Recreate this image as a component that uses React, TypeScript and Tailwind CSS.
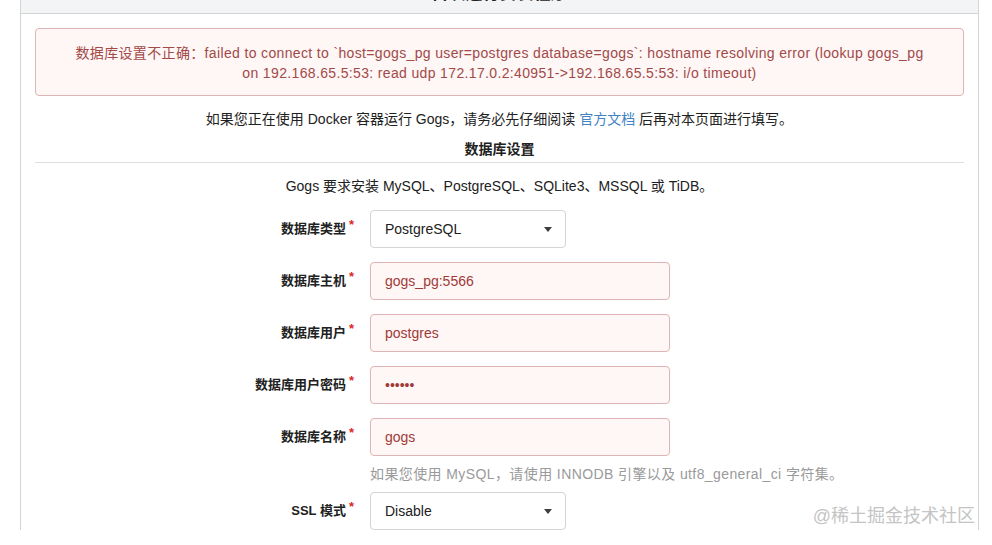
const FONT = {
  fontFamily: '"Liberation Sans", "Noto Sans CJK SC", sans-serif',
};

function Caret() {
  return (
    <svg width="8" height="5" viewBox="0 0 8 5" className="shrink-0">
      <path d="M0 0h8L4 5z" fill="#3d3d3d" />
    </svg>
  );
}

function Label({ text }: { text: string }) {
  return (
    <label className="w-[335px] shrink-0 pr-[16px] text-right text-[13px] font-bold text-[#212121]">
      {text}
      <span className="relative top-[-4px] ml-[3px] text-[#db2828]">*</span>
    </label>
  );
}

function SelectField({ label, value }: { label: string; value: string }) {
  return (
    <div className="flex items-center">
      <Label text={label} />
      <div className="flex h-[38px] w-[196px] items-center justify-between rounded-[4px] border border-[#d4d4d5] bg-white pl-[14px] pr-[13px] text-[14px] text-[#212121]">
        <span>{value}</span>
        <Caret />
      </div>
    </div>
  );
}

function ErrorInput({ label, value }: { label: string; value: string }) {
  return (
    <div className="flex items-center">
      <Label text={label} />
      <div className="flex h-[38px] w-[300px] items-center rounded-[4px] border border-[#e0b4b4] bg-[#fff6f6] px-[14px] text-[14px] text-[#9f3a38]">
        {value}
      </div>
    </div>
  );
}

export default function App() {
  return (
    <div className="relative h-[545px] w-[992px] overflow-hidden bg-white" style={FONT}>
      <div className="mx-[20px] mt-[-26px] w-[959px] border-x border-[#d4d4d5]">
        <div className="flex h-[40px] items-center justify-center border-b border-[#d4d4d5] bg-[#f3f4f5] text-[17px] font-bold text-[#212121]">
          首次运行安装程序
        </div>
        <div className="px-[14px] pt-[14px]">
          <div className="rounded-[4px] border border-[#e0b4b4] bg-[#fff6f6] px-[21px] pb-[12px] pt-[14px] text-center text-[14px] leading-[20px] tracking-[0.35px] text-[#a14a48]">
            数据库设置不正确：failed to connect to `host=gogs_pg user=postgres database=gogs`: hostname resolving error (lookup gogs_pg
            <br />
            on 192.168.65.5:53: read udp 172.17.0.2:40951-&gt;192.168.65.5:53: i/o timeout)
          </div>

          <p className="mt-[13px] text-center text-[14px] leading-[20px] text-[#212121]">
            如果您正在使用 Docker 容器运行 Gogs，请务必先仔细阅读{" "}
            <span className="text-[#4183c4]">官方文档</span> 后再对本页面进行填写。
          </p>

          <h4 className="mt-[10px] border-b border-[#dedede] pb-[3px] text-center text-[14px] font-bold leading-[20px] text-[#212121]">
            数据库设置
          </h4>

          <p className="mt-[13px] text-center text-[14px] leading-[20px] text-[#212121]">
            Gogs 要求安装 MySQL、PostgreSQL、SQLite3、MSSQL 或 TiDB。
          </p>

          <div className="mt-[14px] flex flex-col gap-[14px]">
            <SelectField label="数据库类型" value="PostgreSQL" />
            <ErrorInput label="数据库主机" value="gogs_pg:5566" />
            <ErrorInput label="数据库用户" value="postgres" />
            <ErrorInput label="数据库用户密码" value="••••••" />
            <ErrorInput label="数据库名称" value="gogs" />
          </div>
          <p className="ml-[335px] mt-[10px] text-[14px] leading-[16px] tracking-[0.4px] text-[#9a9a9a]">
            如果您使用 MySQL，请使用 INNODB 引擎以及 utf8_general_ci 字符集。
          </p>
          <div className="mt-[10px]">
            <SelectField label="SSL 模式" value="Disable" />
          </div>
        </div>
      </div>

      <div className="absolute bottom-[15px] right-[17px] text-[18px] text-[#c4c4c4]">
        @稀土掘金技术社区
      </div>
    </div>
  );
}
